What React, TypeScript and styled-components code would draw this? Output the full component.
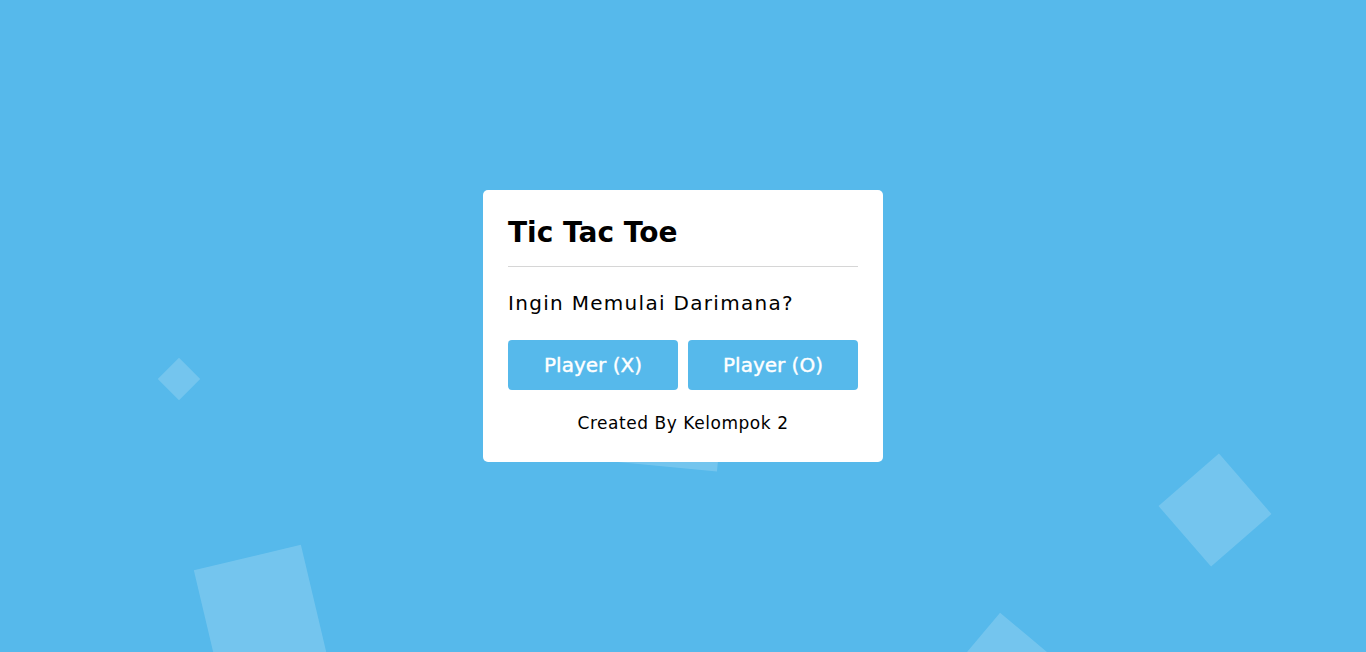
import styled, { createGlobalStyle } from "styled-components";

const GlobalStyle = createGlobalStyle`
  * {
    box-sizing: border-box;
  }
  html, body {
    margin: 0;
    padding: 0;
  }
  body {
    font-family: "DejaVu Sans", Inter, sans-serif;
  }
`;

type SquareProps = {
  $x: number;
  $y: number;
  $size: number;
  $rotate: number;
};

// decorative squares floating in the background
const squares: SquareProps[] = [
  { $x: 179, $y: 379, $size: 30, $rotate: 45 },
  { $x: 260, $y: 611, $size: 110, $rotate: -13.3 },
  { $x: 1215, $y: 510, $size: 80, $rotate: -41 },
  { $x: 1005, $y: 669, $size: 80, $rotate: 40 },
  { $x: 672, $y: 417, $size: 100, $rotate: 5.5 },
];

function App(): JSX.Element {
  return (
    <>
      <GlobalStyle />
      <Page>
        {squares.map((sq, i) => (
          <Square key={i} {...sq} />
        ))}
        <Card>
          <Header>
            <Title>Tic Tac Toe</Title>
          </Header>
          <Question>Ingin Memulai Darimana?</Question>
          <Choices>
            <PlayerButton>Player (X)</PlayerButton>
            <PlayerButton>Player (O)</PlayerButton>
          </Choices>
          <Credit>Created By Kelompok 2</Credit>
        </Card>
      </Page>
    </>
  );
}

export default App;

const Page = styled.div`
  position: relative;
  width: 100vw;
  height: 100vh;
  overflow: hidden;
  background: #56b9eb;
  display: flex;
  align-items: center;
  justify-content: center;
`;

const Square = styled.div<SquareProps>`
  position: absolute;
  left: ${(p) => p.$x - p.$size / 2}px;
  top: ${(p) => p.$y - p.$size / 2}px;
  width: ${(p) => p.$size}px;
  height: ${(p) => p.$size}px;
  background: rgba(255, 255, 255, 0.18);
  transform: rotate(${(p) => p.$rotate}deg);
`;

const Card = styled.div`
  position: relative;
  z-index: 1;
  width: 400px;
  padding: 25px 25px 26px;
  background: #fff;
  border-radius: 5px;
  color: #000;
`;

const Header = styled.div`
  padding-bottom: 15px;
  border-bottom: 1px solid #d6d6d6;
`;

const Title = styled.h1`
  margin: 0;
  font-size: 28px;
  line-height: 36px;
  font-weight: 700;
`;

const Question = styled.p`
  margin: 21px 0 0;
  font-size: 20px;
  line-height: 30px;
  font-weight: 400;
  letter-spacing: 1.3px;
`;

const Choices = styled.div`
  display: grid;
  grid-template-columns: 1fr 1fr;
  gap: 10px;
  margin-top: 22px;
`;

const PlayerButton = styled.button`
  height: 50px;
  border: none;
  border-radius: 4px;
  background: #56b9eb;
  color: #fff;
  font-family: inherit;
  font-size: 20px;
  font-weight: 400;
  -webkit-text-stroke: 0.4px #fff;
  cursor: pointer;
`;

const Credit = styled.p`
  margin: 20px 0 0;
  text-align: center;
  font-size: 17px;
  line-height: 26px;
  letter-spacing: 0.55px;
`;
